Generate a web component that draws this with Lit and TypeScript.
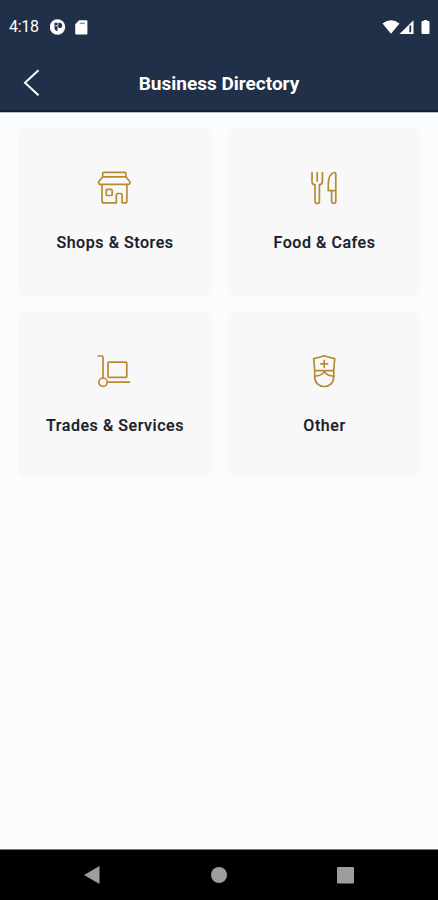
import { LitElement, html, svg, css } from "lit";
import { customElement } from "lit/decorators.js";

const icons = {
  shop: svg`<path d="M7.500 2.300h21.200q1.200 0 1.200 1.200v3.200l4 5.100q.6 2.200-1.500 2.500H4.100q-2-.3-1.400-2.500l4-5.100V3.500q0-1.200.8-1.200z"/>
    <path d="M7 6.800h22.600M6 14.500v16.400q0 2 2 2h12.300v-7.600q0-1.800 1.800-1.800h2.200q1.800 0 1.800 1.800v7.600h2.800q2 0 2-2V14.500"/>
    <rect x="10.200" y="19.300" width="6" height="6.200" rx="1"/>`,
  food: svg`<path d="M6 2.700v9q0 2.600 3 3v16.300q0 2.500 2.200 2.500t2.200-2.500V14.700q3-.4 3-3v-9M11.200 2.700v8.500"/>
    <path d="M29.800 31V4q0-1.700-1.700-1.500c-4.700 1.400-5.800 7-5.800 12v6.200h3.300V31q0 2.400 2.100 2.400t2.100-2.400zM25.600 20.700h4"/>`,
  trades: svg`<path d="M2.200 3h3.600q1.200 0 1.200 1.200v21M12 29.200h21.500"/>
    <rect x="12" y="9.200" width="18.800" height="15.200" rx=".8"/>
    <circle cx="7" cy="29.200" r="4.200"/>`,
  other: svg`<path d="M7.700 5.600Q14 4.400 18.200 2.700q4.200 1.700 10.500 2.900l-1 12v6.400c0 5.700-4 9.500-9.400 9.500S8.700 29.700 8.700 24v-6.400z"/>
    <path d="M8.800 17.700h18.800M8.900 23.200c4-.2 7-1.200 9.600-4.400 2.200 3.200 5 4.200 9.100 4.400"/>
    <path d="M18.200 7.400v6.800M14.800 10.800h6.800"/>`,
};

@customElement("directory-card")
class DirectoryCard extends LitElement {
  static properties = { icon: {}, label: {} };
  declare icon: keyof typeof icons;
  declare label: string;
  static styles = css`
    :host { display: flex; flex-direction: column; align-items: center; box-sizing: border-box; padding-top: 42px; border-radius: 8px; background: #f8f8f8; box-shadow: 0 0 3px #f8f9f9; }
    :host(.lower) { padding-top: 41px; }
    .icon { display: block; width: 36px; height: 36px; margin-right: 1px; fill: none; stroke: #b98a36; stroke-width: 1.700; stroke-linejoin: round; stroke-linecap: round; }
    .label { margin-top: 27px; padding-left: 1px; font-size: 16px; line-height: 20px; font-weight: 500; letter-spacing: .56px; color: #1b1d2b; -webkit-text-stroke: .2px #1b1d2b; white-space: nowrap; }
  `;
  render() {
    return html`<svg class="icon" viewBox="0 0 36 36">${icons[this.icon]}</svg><div class="label">${this.label}</div>`;
  }
}

@customElement("app-root")
class AppRoot extends LitElement {
  static styles = css`
    :host { display: flex; flex-direction: column; height: 900px; background: #fafcfe; font-family: Roboto, sans-serif; overflow: hidden; }
    svg { display: block; }
    .top { height: 112px; box-sizing: border-box; background: #203048; border-bottom: 2px solid #11213a; color: #fff; box-shadow: 0 1px 0 #b4bcc6; }
    .status { height: 54px; display: flex; align-items: center; padding: 0 7px 0 9px; box-sizing: border-box; }
    .time { width: 41px; font-size: 16px; letter-spacing: -.3px; line-height: 20px; }
    .left { margin-right: auto; }
    .bar { height: 57px; display: grid; grid-template-columns: 60px 1fr 60px; align-items: center; }
    .back { margin-left: 22px; }
    .title { padding-top: 2px; text-align: center; font-size: 19px; font-weight: 700; line-height: 24px; }
    .cards { flex: 1; display: grid; grid-template-columns: 193px 192px; grid-template-rows: 168px 165px; gap: 16px 17px; padding: 16px 18px; align-content: start; }
    .nav { height: 51px; box-sizing: border-box; background: #000; border-top: 1px solid #777; display: grid; grid-template-columns: 183px 72px 183px; align-items: center; justify-items: center; }
    .nav svg { fill: #9d9d9d; }
    .recent { margin-left: -2px; }
  `;
  render() {
    return html`
      <header class="top">
        <div class="status">
          <span class="time">4:18</span>
          <svg class="left" width="40" height="18" viewBox="0 0 40 18">
            <circle cx="7.500" cy="9" r="7.700" fill="#fff"/>
            <path d="M4.500 4.800h3v8.500Q4.500 12.500 4.500 9.800zM8.300 4.800h1.200a2.600 2.600 0 0 1 0 5.200H8.300z" fill="#203048"/>
            <path d="M5.500 7h1.300v1.300H5.500z" fill="#fff"/>
            <path d="M29.200 2.200h7q1.200 0 1.200 1.200v11.800q0 1.200-1.200 1.200H26.400q-1.200 0-1.200-1.200V6.200z" fill="#fff"/>
            <path d="M29.700 4.600h5v1.500h-5z" fill="#8a95a6"/>
          </svg>
          <svg width="49" height="18" viewBox="0 0 49 18">
            <path d="M.5 5.500Q9 -.8 17.500 5.500L9 15.700z" fill="#fff"/>
            <path d="M31.500 2.200V16H17.500z" fill="#fff"/>
            <path d="M27.400 7.500h1.800v6.800h-1.800z" fill="#203048"/>
            <path d="M41.800 2h3.400v1h1.300q1 0 1 1V15q0 1-1 1h-6q-1 0-1-1V4q0-1 1-1h1.300z" fill="#fff"/>
          </svg>
        </div>
        <div class="bar">
          <svg class="back" width="20" height="30" viewBox="0 0 20 30"><path d="M16.500 2.300L3 14.800l13.500 12.500" fill="none" stroke="#fff" stroke-width="2"/></svg>
          <div class="title">Business Directory</div>
        </div>
      </header>
      <main class="cards">
        <directory-card icon="shop" label="Shops &amp; Stores"></directory-card>
        <directory-card icon="food" label="Food &amp; Cafes"></directory-card>
        <directory-card class="lower" icon="trades" label="Trades &amp; Services"></directory-card>
        <directory-card class="lower" icon="other" label="Other"></directory-card>
      </main>
      <nav class="nav">
        <svg width="18" height="20" viewBox="0 0 18 20"><path d="M1 10L16.500 1v18z"/></svg>
        <svg width="16" height="16" viewBox="0 0 16 16"><circle cx="8" cy="8" r="8"/></svg>
        <svg class="recent" width="17" height="17" viewBox="0 0 17 17"><rect width="17" height="16.500" rx="1"/></svg>
      </nav>`;
  }
}
